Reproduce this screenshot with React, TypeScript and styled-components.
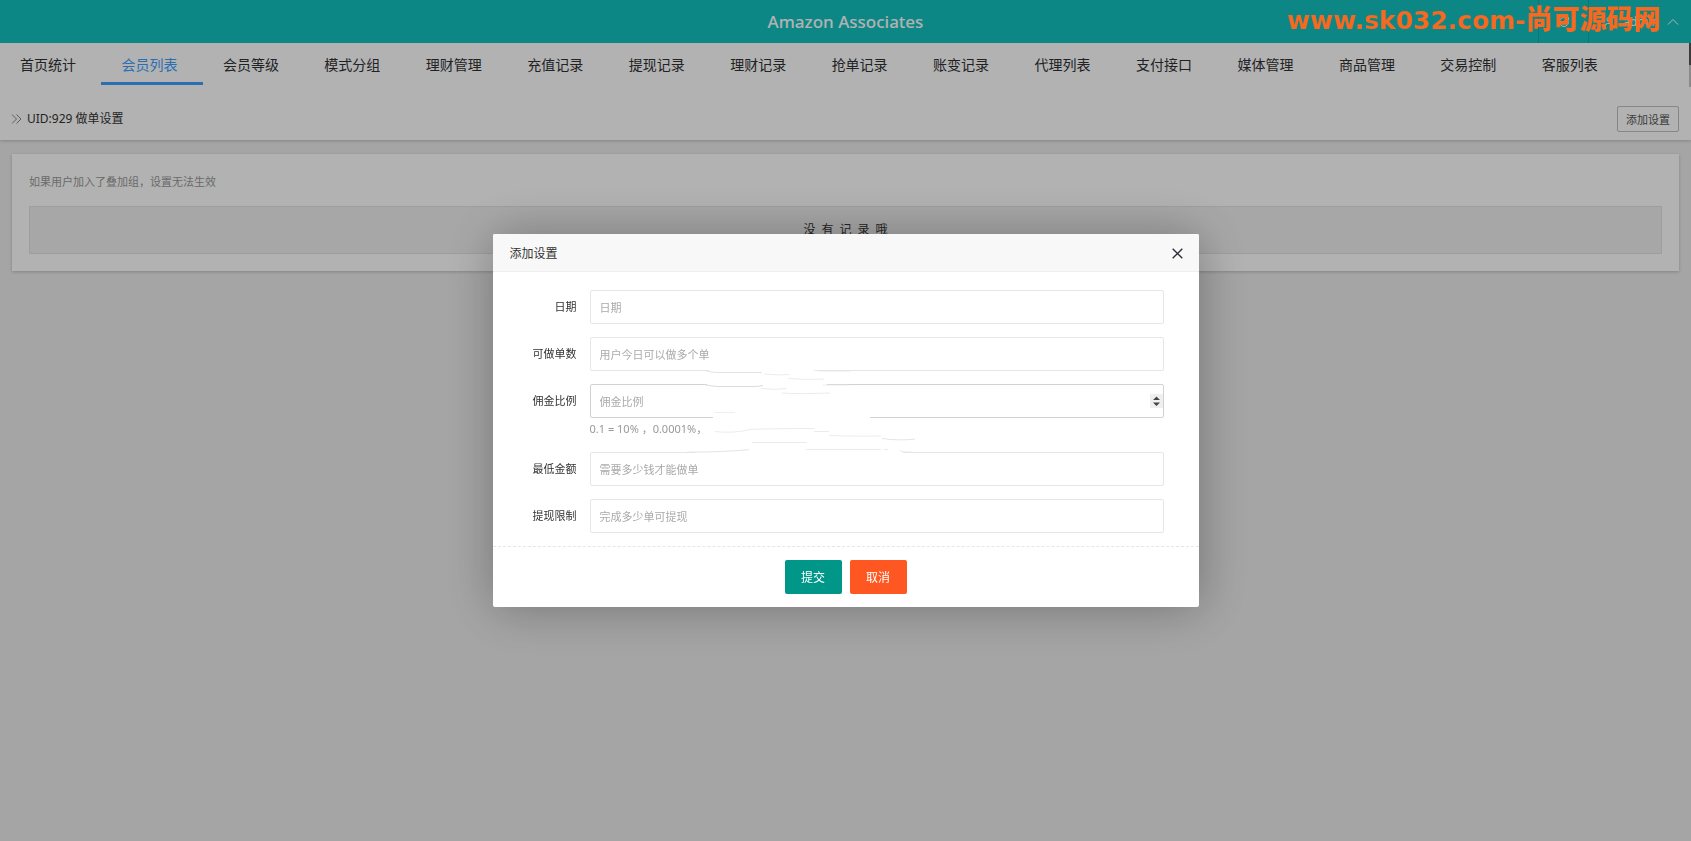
import React from "react";
import styled, { createGlobalStyle } from "styled-components";
import { RotateCw, User } from "lucide-react";

const GlobalStyle = createGlobalStyle`
  *, *::before, *::after { box-sizing: border-box; }
  html, body, #root { height: 100%; }
  body {
    margin: 0;
    background: #ececec;
    color: #333;
    font: 12px/18px "Noto Sans", "Noto Sans CJK SC", sans-serif;
    overflow: hidden;
  }
  button, input { font-family: inherit; }
`;

const Page = styled.div`
  min-height: 100vh;
  display: flex;
  flex-direction: column;
`;

const TopBar = styled.header`
  display: grid;
  grid-template-columns: 1fr auto 1fr;
  align-items: center;
  height: 43px;
  background: #13c2bf;
  color: #fff;
`;

const Brand = styled.h1`
  grid-column: 2;
  margin: 0;
  font-size: 17px;
  line-height: 24px;
  font-weight: 500;
`;

const Tools = styled.div`
  display: flex;
  align-self: stretch;
  justify-content: flex-end;
`;

const Tool = styled.button<{ $wide?: boolean }>`
  display: flex;
  align-items: center;
  justify-content: ${(p) => (p.$wide ? "flex-end" : "center")};
  gap: 8px;
  width: ${(p) => (p.$wide ? 103 : 50)}px;
  padding: 0 ${(p) => (p.$wide ? 12 : 0)}px 0 0;
  border: 0;
  border-left: 1px solid #11ada9;
  background: none;
  color: inherit;
  font-size: 12px;
`;

const Nav = styled.nav`
  position: relative;
  display: flex;
  height: 45px;
  background: #fff;
  &::after {
    content: "";
    position: absolute;
    top: 0;
    right: 0;
    width: 2px;
    height: 44px;
    background: linear-gradient(#555 50%, #c4c4c4 50%);
  }
`;

const NavLink = styled.a<{ $active?: boolean }>`
  flex: 0 0 6%;
  height: 42px;
  padding-left: 20px;
  font-size: 14px;
  line-height: 44px;
  white-space: nowrap;
  text-decoration: none;
  color: ${(p) => (p.$active ? "#409eff" : "#303133")};
  border-bottom: 3px solid ${(p) => (p.$active ? "#409eff" : "transparent")};
`;

const TitleBar = styled.div`
  display: flex;
  align-items: center;
  justify-content: space-between;
  height: 52px;
  padding: 10px 12px 0 11px;
  background: #fff;
  box-shadow: 0 1px 3px rgba(0, 0, 0, 0.2);
`;

const Title = styled.h2`
  display: flex;
  align-items: center;
  gap: 5px;
  margin: 0;
  font-size: 12px;
  font-weight: 400;
`;

const OutlineButton = styled.button`
  height: 26px;
  padding: 0 8px;
  border: 1px solid #c0c0c0;
  border-radius: 2px;
  background: #fff;
  color: #555;
  font-size: 11px;
`;

const Card = styled.main`
  margin: 14px 12px;
  padding: 17px;
  background: #fff;
  box-shadow: 0 1px 3px rgba(0, 0, 0, 0.2);
`;

const Hint = styled.p`
  margin: 0;
  padding: 2px 0 15px;
  color: #999;
  font-size: 11px;
  line-height: 18px;
`;

const Empty = styled.p`
  margin: 0;
  border: 1px solid #e3e3e3;
  background: #f0f0f0;
  text-align: center;
  line-height: 46px;
  white-space: pre;
`;

const Shade = styled.div`
  position: fixed;
  inset: 0;
  display: flex;
  align-items: center;
  justify-content: center;
  background: rgba(0, 0, 0, 0.3);
`;

const Dialog = styled.section`
  width: 706px;
  background: #fff;
  border-radius: 2px;
  box-shadow: 1px 1px 50px rgba(0, 0, 0, 0.3);
`;

const DialogHead = styled.header`
  display: flex;
  align-items: center;
  justify-content: space-between;
  height: 38px;
  padding: 2px 16px 0 17px;
  border-bottom: 1px solid #eee;
  background: #f8f8f8;
  border-radius: 2px 2px 0 0;
`;

const DialogTitle = styled.h3`
  margin: 0;
  font-size: 12px;
  font-weight: 400;
`;

const CloseButton = styled.button`
  display: flex;
  padding: 0;
  border: 0;
  background: none;
  color: #2e2d3c;
`;

const Form = styled.form`
  position: relative;
  padding-top: 18px;
`;

const Row = styled.div`
  display: grid;
  grid-template-columns: 84px 1fr;
  column-gap: 13px;
  padding-right: 35px;
  margin-bottom: 13px;
`;

const Label = styled.label`
  text-align: right;
  font-size: 11px;
  line-height: 34px;
`;

const Field = styled.div`
  position: relative;
  height: 34px;
`;

const Input = styled.input<{ $strong?: boolean }>`
  display: block;
  width: 100%;
  height: 34px;
  padding: 0 1px 0 9px;
  border: 1px solid ${(p) => (p.$strong ? "#d2d2d2" : "#e6e6e6")};
  border-radius: 2px;
  background: #fff;
  font-size: 11px;
  outline: 0;
  appearance: textfield;
  &::placeholder { color: #aaa; }
`;

const Stepper = styled.svg`
  position: absolute;
  top: 10px;
  right: 1px;
  width: 13px;
  height: 14px;
  background: #efefef;
  pointer-events: none;
`;

const Help = styled.small`
  grid-column: 2;
  height: 21px;
  color: #999;
  font-size: 11px;
  line-height: 21px;
`;

const Actions = styled.div`
  display: flex;
  justify-content: center;
  gap: 8px;
  padding: 13px 0;
  border-top: 1px dashed #e6e6e6;
`;

const ActionButton = styled.button<{ $color: string }>`
  width: 57px;
  height: 34px;
  border: 0;
  border-radius: 2px;
  background: ${(p) => p.$color};
  color: #fff;
  font-size: 12px;
`;

const Smudges = styled.svg`
  position: absolute;
  left: 168px;
  top: 88px;
  width: 270px;
  height: 100px;
  pointer-events: none;
`;

const Watermark = styled.div`
  position: fixed;
  top: 0;
  right: 30px;
  color: #f76820;
  font: bold 25px/38px "DejaVu Sans", sans-serif;
  white-space: nowrap;
  span { font: 900 27px/36px "Noto Sans CJK SC", sans-serif; }
`;

const links = [
  "首页统计", "会员列表", "会员等级", "模式分组", "理财管理", "充值记录", "提现记录", "理财记录",
  "抢单记录", "账变记录", "代理列表", "支付接口", "媒体管理", "商品管理", "交易控制", "客服列表",
];

const fields = [
  { id: "date", label: "日期", hint: "日期" },
  { id: "count", label: "可做单数", hint: "用户今日可以做多个单" },
  { id: "ratio", label: "佣金比例", hint: "佣金比例", help: "0.1 = 10% ，0.0001%，" },
  { id: "min", label: "最低金额", hint: "需要多少钱才能做单" },
  { id: "limit", label: "提现限制", hint: "完成多少单可提现" },
];

/* Wiped stretches of the field borders, and the faint strokes left around them */
function WipedArea() {
  return (
    <Smudges viewBox="660 360 270 100" aria-hidden="true">
      <g fill="#fff">
        <rect x="708" y="369" width="108" height="3" />
        <rect x="706" y="383" width="120" height="3" />
        <rect x="712" y="415" width="157" height="5" />
        <rect x="694" y="450" width="208" height="5" />
      </g>
      <g fill="none" stroke="#e4e4e4">
        <path d="M704 370.5q6 2 12 2h45" />
        <path d="M763 374q14 1.500 26 .5M787 378.500q16 1.500 36 .5M812 370.500q8 1 38 .5" opacity=".7" />
        <path d="M703 384.500q8 1.800 14 2h36q6 0 9-1" stroke="#dcdcdc" />
        <path d="M760 388.500q14 1.800 25 0M781 393q14 1.200 48 0M822 385h26" opacity=".75" />
        <path d="M713 412.500h21" opacity=".6" />
        <path d="M714 431.500q18 2 33-1.500M813 431.500h15M828 435.500q30 1 52 .5" opacity=".7" />
        <path d="M747 429.500q22-1 66-1M751 442.500h55" opacity=".75" />
        <path d="M881 438.500q18 2.500 33 .5" />
        <path d="M686 452.200q38-.2 62-2.500" />
        <path d="M805 449.500h75M883 449.500h4M899 451q5 1.200 12 1.200" opacity=".7" />
      </g>
    </Smudges>
  );
}

export default function App() {
  return (
    <>
      <GlobalStyle />
      <Page>
        <TopBar>
          <Brand>Amazon Associates</Brand>
          <Tools>
            <Tool aria-label="刷新"><RotateCw size={12} /></Tool>
            <Tool $wide>
              <User size={12} />admin
              <svg width="12" height="8" viewBox="0 0 12 8" fill="none" stroke="currentColor">
                <path d="M1 6.500 6 1.500l5 5" />
              </svg>
            </Tool>
          </Tools>
        </TopBar>
        <Nav>
          {links.map((text, i) => (
            <NavLink key={text} href="#" $active={i === 1}>{text}</NavLink>
          ))}
        </Nav>
        <TitleBar>
          <Title>
            <svg width="11" height="12" viewBox="0 0 11 12" fill="none" stroke="#888">
              <path d="M1 1.500 5.500 6 1 10.500M5.500 1.500 10 6l-4.500 4.500" />
            </svg>
            UID:929 做单设置
          </Title>
          <OutlineButton>添加设置</OutlineButton>
        </TitleBar>
        <Card>
          <Hint>如果用户加入了叠加组，设置无法生效</Hint>
          <Empty>{"没\u2002有\u2002记\u2002录\u2002哦"}</Empty>
        </Card>
      </Page>
      <Shade>
        <Dialog role="dialog" aria-labelledby="dialog-title">
          <DialogHead>
            <DialogTitle id="dialog-title">添加设置</DialogTitle>
            <CloseButton aria-label="关闭">
              <svg width="11" height="11" viewBox="0 0 11 11" fill="none" stroke="currentColor" strokeWidth="1.4">
                <path d="m.7.7 9.600 9.600M10.300.7.7 10.300" />
              </svg>
            </CloseButton>
          </DialogHead>
          <Form>
            {fields.map((f) => (
              <Row key={f.id}>
                <Label htmlFor={f.id}>{f.label}</Label>
                <Field>
                  <Input id={f.id} type={f.help ? "number" : "text"} placeholder={f.hint} $strong={!!f.help} />
                  {f.help && (
                    <Stepper viewBox="0 0 13 14" fill="#444" aria-hidden="true">
                      <path d="M3 6h7L6.500 2.500zM3 8.500h7L6.500 12z" />
                    </Stepper>
                  )}
                </Field>
                {f.help && <Help>{f.help}</Help>}
              </Row>
            ))}
            <WipedArea />
            <Actions>
              <ActionButton type="submit" $color="#009688">提交</ActionButton>
              <ActionButton type="button" $color="#ff5722">取消</ActionButton>
            </Actions>
          </Form>
        </Dialog>
      </Shade>
      <Watermark>www.sk032.com-<span>尚可源码网</span></Watermark>
    </>
  );
}
